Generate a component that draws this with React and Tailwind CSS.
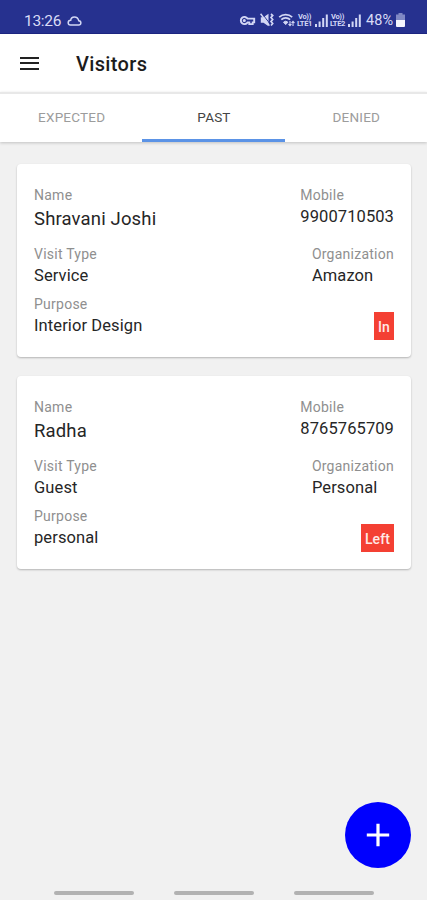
import { useState } from "react";

const tabs = ["EXPECTED", "PAST", "DENIED"];

const visitors = [
  {
    name: "Shravani Joshi",
    mobile: "9900710503",
    visitType: "Service",
    organization: "Amazon",
    purpose: "Interior Design",
    status: "In",
  },
  {
    name: "Radha",
    mobile: "8765765709",
    visitType: "Guest",
    organization: "Personal",
    purpose: "personal",
    status: "Left",
  },
];

const SignalBars = () => (
  <svg width="13" height="13" viewBox="0 0 13 13" fill="#d3d7f5">
    <rect x="0" y="10" width="2" height="3" />
    <rect x="3.6" y="7.5" width="2" height="5.5" />
    <rect x="7.2" y="4" width="2" height="9" />
    <rect x="10.8" y="0.5" width="2" height="12.5" />
  </svg>
);

const Volte = ({ sim }) => (
  <div className="w-[17px] whitespace-nowrap text-center text-[7.5px] font-bold leading-[7px] tracking-[-0.3px] text-[#d3d7f5]">
    Vo))
    <br />
    LTE{sim}
  </div>
);

const StatusBar = () => (
  <div className="flex h-[34px] items-start border-b border-[#1c2580] bg-[#26318f] pl-6 pr-[22px] pt-[13px] text-[#d9dcf6]">
    <span className="w-[43px] whitespace-nowrap text-[15.5px] leading-[16px] tracking-[-0.3px]">
      13:26
    </span>
    {/* cloud */}
    <svg className="mt-[3px]" width="15" height="10" viewBox="0 0 15 10" fill="none" stroke="#d3d7f5" strokeWidth="1.5">
      <path d="M3.5 9.1h8a2.2 2.2 0 0 0 .3-4.4C11.2 2.3 9.6.9 7.4.9S3.9 2.3 3.7 4.3a2.4 2.4 0 0 0-.2 4.8z" />
    </svg>
    <div className="ml-auto flex items-start">
      {/* vpn key */}
      <svg className="mr-[4px] mt-[2px]" width="17" height="11" viewBox="0 0 17 11" fill="none" stroke="#d3d7f5" strokeWidth="1.9">
        <path d="M8.5 3.6A3.6 3.6 0 1 0 8.5 7.4h1.8v1.7h3.4V7.4h1.5V3.6z" />
        <circle cx="5.3" cy="5.5" r="0.8" strokeWidth="1.5" />
      </svg>
      {/* muted speaker, set to vibrate */}
      <svg className="mr-[4px]" width="14" height="14" viewBox="0 0 14 14" fill="#d3d7f5">
        <path d="M.8 4.2h2.7L8.5.8v12.4L3.5 9.8H.8z" />
        <path d="M1.7.2 10 10.8" stroke="#26318f" strokeWidth="1" />
        <path d="M.6.8 9.4 12.6" stroke="#d3d7f5" strokeWidth="1.5" />
        <path d="M11 1l1.7 1.5-1.7 2 1.7 2-1.7 2 1.7 2-1.7 2" fill="none" stroke="#d3d7f5" strokeWidth="1.7" />
      </svg>
      {/* wifi */}
      <svg className="mr-px" width="17" height="14" viewBox="0 0 17 14" fill="none" stroke="#d3d7f5" strokeWidth="1.7">
        <path d="M1.2 4.2a9.5 9.5 0 0 1 13 0" />
        <path d="M3.3 6.7a6.3 6.3 0 0 1 8.8 0" />
        <path d="M5.5 9.2a3.2 3.2 0 0 1 4.4 0L7.7 11.6z" fill="#d3d7f5" strokeWidth="1" />
        <path d="M12 8v4.5M10.5 11l1.5 1.7 1.5-1.7M15 13V8.5M13.5 10 15 8.3l1.5 1.7" strokeWidth="1.1" />
      </svg>
      <Volte sim="1" />
      <div className="ml-[2px] mt-px">
        <SignalBars />
      </div>
      <div className="ml-px">
        <Volte sim="2" />
      </div>
      <div className="ml-[2px] mt-px">
        <SignalBars />
      </div>
      <span className="ml-[5px] w-[29px] whitespace-nowrap text-[14.5px] leading-[16px] tracking-[0.1px]">
        48%
      </span>
      {/* battery */}
      <svg className="ml-px" width="9" height="14" viewBox="0 0 9 14">
        <path d="M2.5 0h4v1.5H9v6H0v-6h2.5z" fill="#8088c4" />
        <path d="M0 7h9v6a1 1 0 0 1-1 1H1a1 1 0 0 1-1-1z" fill="#f4f5fd" />
      </svg>
    </div>
  </div>
);

const Field = ({ label, value, big }) => (
  <div className="flex flex-col">
    <span className="text-[14px] leading-[17px] tracking-[0.25px] text-[#8f8f8f]">
      {label}
    </span>
    <span
      className={
        big
          ? "mt-[4px] text-[18.5px] leading-[22px] tracking-[0.15px]"
          : "mt-[3px] text-[16.5px] leading-[20px] tracking-[0.1px]"
      }
    >
      {value}
    </span>
  </div>
);

const VisitorCard = ({ visitor }) => (
  <div className="h-[193px] rounded-[4px] bg-white px-[17px] pt-[23px] text-[#262626] shadow-[0_1px_2px_rgba(0,0,0,0.25)]">
    <div className="flex h-[59px] justify-between">
      <Field label="Name" value={visitor.name} big />
      <Field label="Mobile" value={visitor.mobile} />
    </div>
    <div className="flex h-[50px] justify-between">
      <Field label="Visit Type" value={visitor.visitType} />
      <Field label="Organization" value={visitor.organization} />
    </div>
    <div className="flex justify-between">
      <Field label="Purpose" value={visitor.purpose} />
      <span className="mt-[16px] flex h-[28px] items-center bg-[#f44033] px-[4px] pt-[2px] text-[14px] font-medium tracking-[0.1px] text-[#ffe9e6]">
        {visitor.status}
      </span>
    </div>
  </div>
);

const App = () => {
  const [activeTab, setActiveTab] = useState("PAST");

  return (
    <div className="flex h-[900px] w-[427px] flex-col overflow-hidden bg-[#f1f1f1] font-[Roboto,sans-serif]">
      <StatusBar />
      <header className="flex h-[58px] items-center bg-white pl-5">
        <button className="flex w-[56px] flex-col gap-[3.5px]">
          <span className="h-[2px] w-[19px] bg-[#222]" />
          <span className="h-[2px] w-[19px] bg-[#222]" />
          <span className="h-[2px] w-[19px] bg-[#222]" />
        </button>
        <h1 className="pt-[2px] text-[20px] font-medium leading-6 tracking-[0.35px] text-[#1c1c1c]">
          Visitors
        </h1>
      </header>
      <nav className="flex h-[50px] border-t-2 border-[#e8e8e8] bg-white shadow-[0_1px_3px_rgba(0,0,0,0.2)]">
        {tabs.map((tab) => (
          <button
            key={tab}
            onClick={() => setActiveTab(tab)}
            className={`flex-1 border-b-[3px] pl-px pt-[2px] text-[13.5px] tracking-[0.2px] ${
              tab === activeTab
                ? "border-[#5b93e6] text-[#444]"
                : "border-transparent text-[#9c9c9c]"
            }`}
          >
            {tab}
          </button>
        ))}
      </nav>
      <main className="flex flex-1 flex-col gap-[19px] pl-[17px] pr-4 pt-[22px]">
        {visitors.map((visitor) => (
          <VisitorCard key={visitor.mobile} visitor={visitor} />
        ))}
      </main>
      <div className="flex justify-end pr-4">
        <button className="flex size-[66px] items-center justify-center rounded-full bg-[#0000fe]">
          <svg width="24" height="24" viewBox="0 0 24 24" stroke="#fff" strokeWidth="3.2">
            <path d="M12 .8v22.4M.8 12h22.4" />
          </svg>
        </button>
      </div>
      {/* gesture hints */}
      <div className="flex h-8 items-start justify-center gap-10 pt-[23px]">
        <span className="h-[3.5px] w-[80px] rounded-full bg-[#b2b2b2]" />
        <span className="h-[3.5px] w-[80px] rounded-full bg-[#b2b2b2]" />
        <span className="h-[3.5px] w-[80px] rounded-full bg-[#b2b2b2]" />
      </div>
    </div>
  );
};

export default App;
